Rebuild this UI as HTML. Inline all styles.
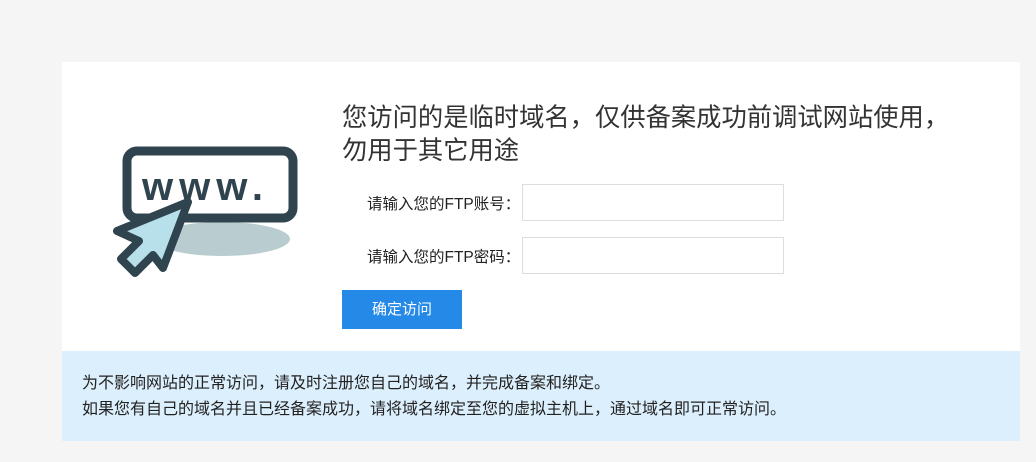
<!DOCTYPE html>
<html><head><meta charset="utf-8"><style>
body{margin:0;width:1036px;height:462px;background:#f5f5f5;font-family:"Liberation Sans","Noto Sans CJK SC",sans-serif;position:relative;overflow:hidden}
.card{position:absolute;left:62px;top:62px;width:958px;height:379px;background:#fff}
.title{position:absolute;left:280px;top:40px;font-size:25.3px;line-height:33px;color:#333;width:660px}
.lbl{position:absolute;left:305px;font-size:15.5px;color:#222}
.inp{position:absolute;left:460px;width:260px;height:35px;border:1px solid #ddd;background:#fff}
.btn{position:absolute;left:280px;top:228px;width:120px;height:39px;background:#2589e8;color:#fff;font-size:15px;text-align:center;line-height:39px}
.info{position:absolute;left:0;top:289px;width:958px;height:90px;background:#dceffc;font-size:16px;color:#222;line-height:26px}
.info div{padding:20px 0 0 20px}
</style></head><body>
<div class="card">
<svg style="position:absolute;left:48px;top:80px" width="190" height="140" viewBox="48 80 190 140">
<ellipse cx="160" cy="177" rx="68" ry="17" fill="#b9cdd0"/>
<rect x="65" y="89" width="166" height="67" rx="10" fill="#fff" stroke="#30444f" stroke-width="9"/>
<text x="80" y="138" font-family="Liberation Sans" font-weight="bold" font-size="40" fill="#30444f" letter-spacing="6">www.</text>
<path d="M126 140 L55 169 L77 179 L59 197 L73 211 L91 193 L101 206 Z" fill="#b8e0ea" stroke="#30444f" stroke-width="8" stroke-linejoin="round"/>
</svg>
<div class="title">您访问的是临时域名，仅供备案成功前调试网站使用，<br>勿用于其它用途</div>
<div class="lbl" style="top:130px">请输入您的FTP账号：</div>
<div class="inp" style="top:122px"></div>
<div class="lbl" style="top:183px">请输入您的FTP密码：</div>
<div class="inp" style="top:175px"></div>
<div class="btn">确定访问</div>
<div class="info"><div>为不影响网站的正常访问，请及时注册您自己的域名，并完成备案和绑定。<br>如果您有自己的域名并且已经备案成功，请将域名绑定至您的虚拟主机上，通过域名即可正常访问。</div></div>
</div>
</body></html>
